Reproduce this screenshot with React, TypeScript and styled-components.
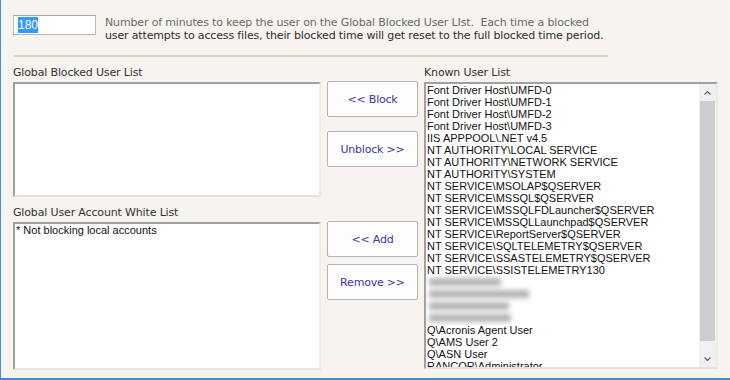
import React from 'react';
import styled, { createGlobalStyle } from 'styled-components';

const GlobalStyle = createGlobalStyle`
  html, body {
    margin: 0;
    padding: 0;
    background: #f7f3ee;
  }
`;

const Window = styled.div`
  width: 730px;
  height: 380px;
  box-sizing: border-box;
  background: #f7f3ee;
  border-left: 1px solid #3b8ee0;
  border-bottom: 2px solid #3b8ee0;
  padding: 15px 0 0 12px;
  font-family: 'DejaVu Sans', Tahoma, sans-serif;
  font-size: 11px;
  color: #333;
  overflow: hidden;
`;

const TopRow = styled.div`
  display: flex;
  align-items: flex-start;
  gap: 9px;
`;

const MinutesBox = styled.div`
  width: 83px;
  height: 20px;
  box-sizing: border-box;
  background: #fff;
  border: 1px solid #b9b9b9;
  border-top-color: #a5a5a5;
  padding: 2px 0 0 4px;
  font-family: 'Liberation Sans', Arial, sans-serif;
  font-size: 12px;
`;

const Selected = styled.span`
  background: #3399ff;
  color: #fff;
  padding: 1px 0;
`;

const Description = styled.div`
  line-height: 13px;
  padding-top: 1px;
  letter-spacing: -0.15px;
`;

const DescLine = styled.div<{ $muted?: boolean }>`
  color: ${({ $muted }) => ($muted ? '#6b6b6b' : '#2e2e2e')};
  white-space: nowrap;
`;

const Separator = styled.hr`
  width: 594px;
  margin: 13px 0 0 1px;
  border: none;
  border-top: 2px solid #d7d2cc;
`;

const Body = styled.div`
  display: flex;
  margin-top: 9px;
`;

const LeftColumn = styled.div`
  width: 308px;
  display: flex;
  flex-direction: column;
`;

const Label = styled.div<{ $top?: number }>`
  margin-top: ${({ $top }) => $top ?? 0}px;
  height: 16px;
  line-height: 13px;
  letter-spacing: -0.15px;
  color: #333;
`;

const ListBox = styled.div<{ $height: number }>`
  height: ${({ $height }) => $height}px;
  box-sizing: border-box;
  background: #fff;
  border-top: 2px solid #a0a0a0;
  border-left: 2px solid #a0a0a0;
  border-right: 2px solid #ecebea;
  border-bottom: 2px solid #e3e3e3;
  position: relative;
  overflow: hidden;
  font-family: 'Liberation Sans', Arial, sans-serif;
  font-size: 11px;
  color: #111;
`;

const Items = styled.div`
  padding: 0 0 0 1px;
`;

const Item = styled.div`
  height: 12px;
  line-height: 12px;
  white-space: nowrap;
`;

const Blurred = styled.div<{ $w: number }>`
  height: 12px;
  display: flex;
  align-items: center;
  span {
    display: block;
    width: ${({ $w }) => $w}px;
    height: 8px;
    margin-left: 2px;
    background: #9a9a9a;
    filter: blur(2.5px);
    opacity: 0.75;
  }
`;

const ButtonColumn = styled.div`
  width: 91px;
  margin-left: 6px;
  display: flex;
  flex-direction: column;
  padding-top: 15px;
`;

const ActionButton = styled.button<{ $gap: number }>`
  margin-top: ${({ $gap }) => $gap}px;
  height: 36px;
  box-sizing: border-box;
  background: #fdfdfd;
  border: 1px solid #b4b4b4;
  border-radius: 2px;
  font-family: 'DejaVu Sans', Tahoma, sans-serif;
  font-size: 11px;
  letter-spacing: -0.2px;
  color: #3838a8;
  padding: 0;
`;

const RightColumn = styled.div`
  width: 294px;
  margin-left: 6px;
  display: flex;
  flex-direction: column;
`;

const Scrollbar = styled.div`
  position: absolute;
  top: 0;
  right: 0;
  bottom: 0;
  width: 17px;
  background: #f0f0f0;
  display: flex;
  flex-direction: column;
  align-items: center;
`;

const Arrow = styled.div`
  height: 17px;
  width: 17px;
  display: flex;
  align-items: center;
  justify-content: center;
`;

const Thumb = styled.div`
  width: 15px;
  height: 240px;
  background: #cdcdcd;
`;

const Spacer = styled.div`
  flex: 1;
`;

const knownUsers = [
  'Font Driver Host\\UMFD-0',
  'Font Driver Host\\UMFD-1',
  'Font Driver Host\\UMFD-2',
  'Font Driver Host\\UMFD-3',
  'IIS APPPOOL\\.NET v4.5',
  'NT AUTHORITY\\LOCAL SERVICE',
  'NT AUTHORITY\\NETWORK SERVICE',
  'NT AUTHORITY\\SYSTEM',
  'NT SERVICE\\MSOLAP$QSERVER',
  'NT SERVICE\\MSSQL$QSERVER',
  'NT SERVICE\\MSSQLFDLauncher$QSERVER',
  'NT SERVICE\\MSSQLLaunchpad$QSERVER',
  'NT SERVICE\\ReportServer$QSERVER',
  'NT SERVICE\\SQLTELEMETRY$QSERVER',
  'NT SERVICE\\SSASTELEMETRY$QSERVER',
  'NT SERVICE\\SSISTELEMETRY130',
];

const hiddenUsers = [72, 100, 80, 82];

const moreUsers = ['Q\\Acronis Agent User', 'Q\\AMS User 2', 'Q\\ASN User', 'RANCOR\\Administrator'];

const Chevron = ({ up }: { up?: boolean }) => (
  <svg width="7" height="4" viewBox="0 0 7 4">
    <path d={up ? 'M0.5 3.5 L3.5 0.5 L6.5 3.5' : 'M0.5 0.5 L3.5 3.5 L6.5 0.5'} fill="none" stroke="#606060" strokeWidth="1.1" />
  </svg>
);

export const App: React.FC = () => {
  return (
    <Window>
      <GlobalStyle />
      <TopRow>
        <MinutesBox>
          <Selected>180</Selected>
        </MinutesBox>
        <Description>
          <DescLine $muted>
            Number of minutes to keep the user on the Global Blocked User LIst.&nbsp; Each time a blocked
          </DescLine>
          <DescLine>user attempts to access files, their blocked time will get reset to the full blocked time period.</DescLine>
        </Description>
      </TopRow>
      <Separator />
      <Body>
        <LeftColumn>
          <Label>Global Blocked User List</Label>
          <ListBox $height={115} />
          <Label $top={9}>Global User Account White List</Label>
          <ListBox $height={148}>
            <Items>
              <Item>* Not blocking local accounts</Item>
            </Items>
          </ListBox>
        </LeftColumn>
        <ButtonColumn>
          <ActionButton $gap={0}>&lt;&lt; Block</ActionButton>
          <ActionButton $gap={14}>Unblock &gt;&gt;</ActionButton>
          <ActionButton $gap={54}>&lt;&lt; Add</ActionButton>
          <ActionButton $gap={7}>Remove &gt;&gt;</ActionButton>
        </ButtonColumn>
        <RightColumn>
          <Label>Known User List</Label>
          <ListBox $height={287}>
            <Items>
              {knownUsers.map((u) => (
                <Item key={u}>{u}</Item>
              ))}
              {hiddenUsers.map((w, i) => (
                <Blurred key={i} $w={w}>
                  <span />
                </Blurred>
              ))}
              {moreUsers.map((u) => (
                <Item key={u}>{u}</Item>
              ))}
            </Items>
            <Scrollbar>
              <Arrow>
                <Chevron up />
              </Arrow>
              <Thumb />
              <Spacer />
              <Arrow>
                <Chevron />
              </Arrow>
            </Scrollbar>
          </ListBox>
        </RightColumn>
      </Body>
    </Window>
  );
};

export default App;
